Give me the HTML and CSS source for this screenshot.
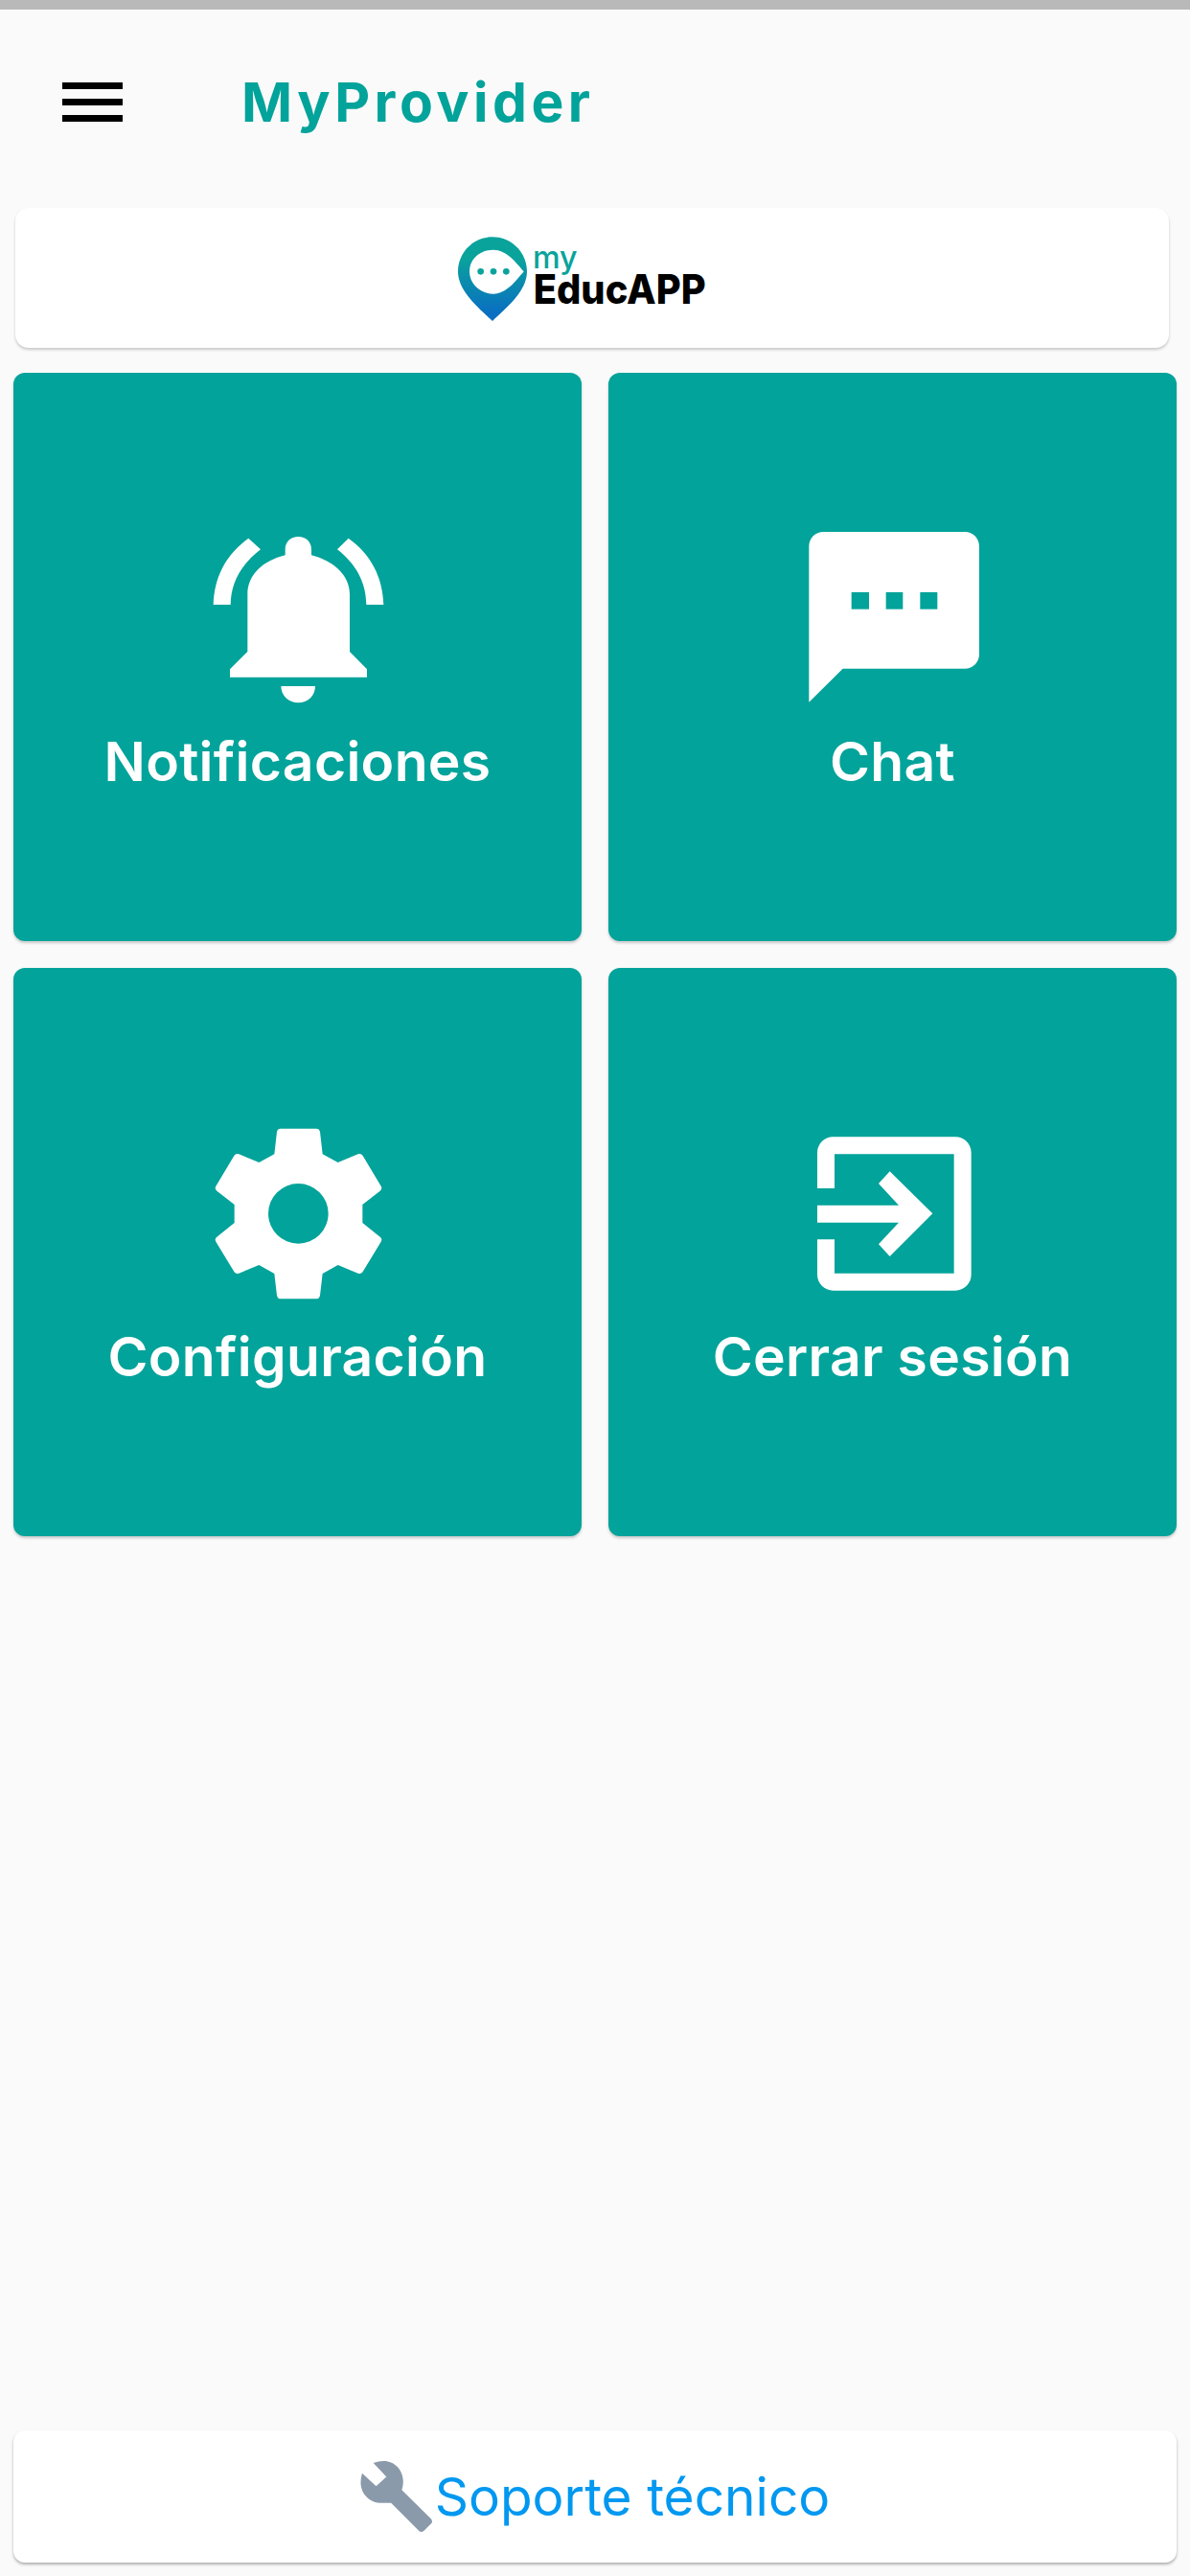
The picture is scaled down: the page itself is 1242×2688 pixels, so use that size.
FILE: index.html
```html
<!DOCTYPE html>
<html lang="es">
<head>
    <meta charset="UTF-8">
    <meta name="viewport" content="width=device-width, initial-scale=1.0">
    <title>MyProvider</title>
    <link rel="stylesheet" href="styles.css">
</head>
<body>

    <div class="status-strip"></div>

    <!-- cabecera -->
    <header class="app-header">
        <div class="menu-button">
            <span></span>
            <span></span>
            <span></span>
        </div>
        <h1 class="app-title">MyProvider</h1>
    </header>

    <!-- logo -->
    <div class="logo-card">
        <svg class="logo" viewBox="0 0 1068 390">
            <defs>
                <linearGradient id="pinGradient" x1="0" y1="0" x2="0" y2="1">
                    <stop offset="0.25" stop-color="#0aa39c"/>
                    <stop offset="0.9" stop-color="#0a6fc2"/>
                </linearGradient>
            </defs>
            <path fill="url(#pinGradient)" d="M222 82C282 82 330 130 330 190C330 250 270 300 222 345C174 300 114 250 114 190C114 130 162 82 222 82Z"/>
            <path fill="#fff" d="M150 190C150 150 185 122 225 122C265 122 295 160 320 190C295 220 265 260 225 260C185 260 150 230 150 190Z"/>
            <circle cx="185" cy="190" r="10" fill="#0aa39c"/>
            <circle cx="225" cy="190" r="10" fill="#0aa39c"/>
            <circle cx="265" cy="190" r="10" fill="#0aa39c"/>
            <text class="logo-my" x="348" y="180" textLength="140" lengthAdjust="spacingAndGlyphs">my</text>
            <text class="logo-name" x="350" y="292" textLength="540" lengthAdjust="spacingAndGlyphs">EducAPP</text>
        </svg>
    </div>

    <!-- menu principal -->
    <main class="menu-grid">
        <a class="menu-card">
            <svg class="menu-icon" viewBox="0 0 780 720">
                <path d="M232 480V300C232 240 280 195 350 178V160C350 135 368 120 391 120C414 120 432 135 432 160V178C500 195 552 240 552 300V480L606 535V560H177V535Z"/>
                <path d="M337 588H444C444 618 420 640 391 640C362 640 337 618 337 588Z"/>
                <path d="M235 125L273 160C215 205 180 260 179 333H125C128 245 165 175 235 125Z"/>
                <path d="M548 125L513 160C570 205 603 260 604 333H658C655 245 618 175 548 125Z"/>
            </svg>
            <span class="menu-label">Notificaciones</span>
        </a>
        <a class="menu-card">
            <svg class="menu-icon" viewBox="0 0 780 720">
                <path d="M127 150C127 125 147 105 172 105H615C640 105 660 125 660 150V488C660 513 640 533 615 533H233L127 638Z"/>
                <rect class="icon-hole" x="260" y="294" width="55" height="53"/>
                <rect class="icon-hole" x="368" y="294" width="53" height="53"/>
                <rect class="icon-hole" x="475" y="294" width="54" height="53"/>
            </svg>
            <span class="menu-label">Chat</span>
        </a>
        <a class="menu-card">
            <svg class="menu-icon" viewBox="0 0 780 720">
                <path fill-rule="evenodd" d="M336 110H447Q457 110 459 120L467 190L515 216L578 190Q588 187 593 195L650 290Q655 299 647 305L592 348V405L647 449Q655 455 650 464L593 558Q588 566 578 563L515 537L467 564L459 632Q457 643 447 643H336Q326 643 324 632L316 564L268 537L205 563Q195 566 190 558L133 464Q128 455 136 449L191 405V348L136 305Q128 299 133 290L190 195Q195 187 205 190L268 216L316 190L324 120Q326 110 336 110ZM391 282A94 94 0 1 0 391 470A94 94 0 1 0 391 282Z"/>
            </svg>
            <span class="menu-label">Configuración</span>
        </a>
        <a class="menu-card">
            <svg class="menu-icon" viewBox="0 0 780 720">
                <path d="M153 297V186C153 158 175 136 203 136H585C613 136 635 158 635 186V567C635 595 613 617 585 617H203C175 617 153 595 153 567V457H207V563H581V190H207V297Z"/>
                <path d="M153 350H408L345 282L380 244L514 376L380 510L345 472L408 404H153Z"/>
            </svg>
            <span class="menu-label">Cerrar sesión</span>
        </a>
    </main>

    <!-- soporte -->
    <footer class="support-card">
        <svg class="support-icon" viewBox="37 56 78 78">
            <path d="M51 59Q57 57 62 57C74 57 83 67 83 79Q83 84 81.5 88L113 119Q115 122 113 124L105 132Q102 134 100 132L70 102Q65 102 60 102C47 102 37.5 92 37.5 80Q37.5 75 39 70L54 84L65 74Z"/>
        </svg>
        <span class="support-label">Soporte técnico</span>
    </footer>

</body>
</html>
```

FILE: styles.css
```css
/* base */
body {
    margin: 0;
    display: flex;
    flex-direction: column;
    height: 2688px;
    overflow: hidden;
    background-color: #fafafa;
    font-family: "Inter", "Liberation Sans", sans-serif;
}

.status-strip {
    height: 10px;
    background-color: #b9b9b9;
}

/* cabecera */
.app-header {
    display: flex;
    align-items: center;
    height: 192px;
    padding-left: 65px;
}

.menu-button {
    display: flex;
    flex-direction: column;
    gap: 10px;
    width: 63px;
    margin-right: 124px;
}

.menu-button span {
    height: 7px;
    background-color: #000;
}

.app-title {
    margin: 0;
    font-size: 57px;
    font-weight: 700;
    letter-spacing: 4.5px;
    color: #02a39a;
}

/* logo */
.logo-card {
    display: flex;
    justify-content: center;
    height: 146px;
    margin: 15px 22px 0 16px;
    padding-top: 3px;
    box-sizing: border-box;
    background-color: #fff;
    border-radius: 14px;
    box-shadow: 0 2px 3px rgba(0, 0, 0, 0.2);
}

.logo {
    width: 356px;
    height: 130px;
}

.logo-my {
    font-family: "Inter", sans-serif;
    font-size: 100px;
    font-weight: 500;
    fill: #0aa39c;
}

.logo-name {
    font-family: "Inter", sans-serif;
    font-size: 126px;
    font-weight: 800;
    fill: #000;
}

/* menu principal */
.menu-grid {
    display: grid;
    grid-template-columns: 593px 593px;
    grid-auto-rows: 593px;
    gap: 28px;
    margin-top: 26px;
    padding: 0 14px;
}

.menu-card {
    display: flex;
    flex-direction: column;
    align-items: center;
    padding-top: 131px;
    box-sizing: border-box;
    background-color: #02a39a;
    border-radius: 12px;
    box-shadow: 0 2px 3px rgba(0, 0, 0, 0.2);
}

.menu-icon {
    width: 260px;
    height: 240px;
    fill: #fff;
}

.icon-hole {
    fill: #02a39a;
}

.menu-label {
    margin-top: 2px;
    font-size: 57px;
    font-weight: 600;
    line-height: 66px;
    letter-spacing: 0.3px;
    color: #fff;
}

/* soporte */
.support-card {
    display: flex;
    align-items: center;
    justify-content: center;
    gap: 2px;
    height: 138px;
    margin: auto 14px 14px;
    background-color: #fff;
    border-radius: 12px;
    box-shadow: 0 2px 3px rgba(0, 0, 0, 0.3);
}

.support-icon {
    width: 76px;
    height: 76px;
    fill: #8a9aab;
}

.support-label {
    font-size: 55px;
    color: #0098f0;
}
```
